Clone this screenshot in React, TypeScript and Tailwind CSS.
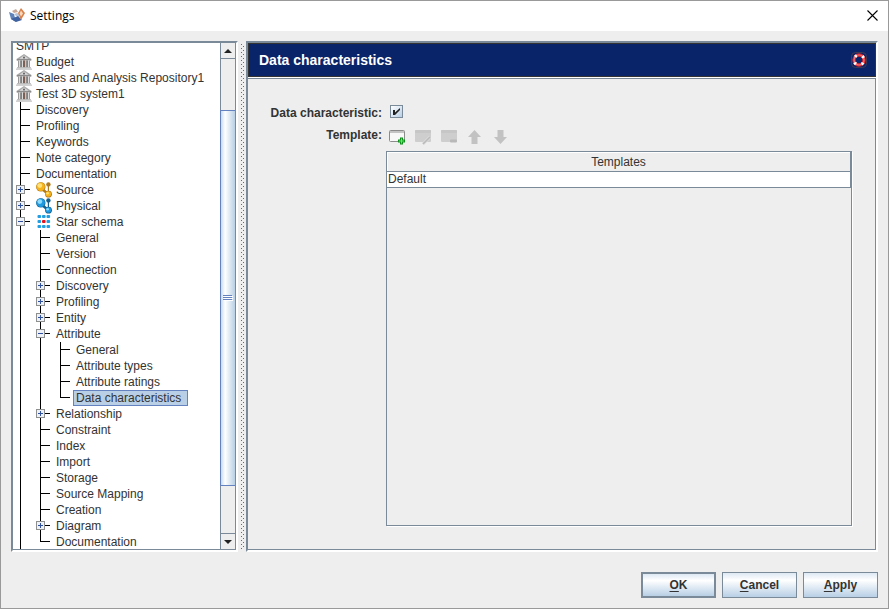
import * as React from "react";

type TreeNode = {
  label: string;
  icon?: "bank" | "source" | "physical" | "star";
  children?: TreeNode[];
  open?: boolean;
};

const repositories: TreeNode[] = [
  { label: "Budget", icon: "bank" },
  { label: "Sales and Analysis Repository1", icon: "bank" },
  { label: "Test 3D system1", icon: "bank" },
];

const settings: TreeNode[] = [
  { label: "Discovery" },
  { label: "Profiling" },
  { label: "Keywords" },
  { label: "Note category" },
  { label: "Documentation" },
  { label: "Source", icon: "source", children: [] },
  { label: "Physical", icon: "physical", children: [] },
  {
    label: "Star schema",
    icon: "star",
    open: true,
    children: [
      { label: "General" },
      { label: "Version" },
      { label: "Connection" },
      { label: "Discovery", children: [] },
      { label: "Profiling", children: [] },
      { label: "Entity", children: [] },
      {
        label: "Attribute",
        open: true,
        children: [
          { label: "General" },
          { label: "Attribute types" },
          { label: "Attribute ratings" },
          { label: "Data characteristics" },
        ],
      },
      { label: "Relationship", children: [] },
      { label: "Constraint" },
      { label: "Index" },
      { label: "Import" },
      { label: "Storage" },
      { label: "Source Mapping" },
      { label: "Creation" },
      { label: "Diagram", children: [] },
      { label: "Documentation" },
    ],
  },
];

const BankIcon = () => (
  <svg width="16" height="16" viewBox="0 0 16 16">
    <path d="M8 0L15.500 5v1.500H0.500V5z" fill="#a8a8a8" />
    <path d="M8 1.500L12.500 4.800H3.500z" fill="#dedede" />
    <circle cx="8" cy="3.600" r="1.100" fill="#6a6a6a" />
    <rect x="1" y="5.200" width="14" height="1.200" fill="#858585" />
    <rect x="2" y="6.400" width="12" height="7" fill="#dcdcdc" />
    <rect x="2" y="6.400" width="1" height="7" fill="#9a9a9a" />
    <rect x="4.400" y="6.400" width="1.300" height="7" fill="#5b5b5b" />
    <rect x="7" y="6.400" width="2.200" height="7" fill="#7d5f54" />
    <rect x="10.400" y="6.400" width="1.300" height="7" fill="#5b5b5b" />
    <rect x="13" y="6.400" width="1" height="7" fill="#9a9a9a" />
    <rect x="1" y="13.200" width="14" height="1.300" fill="#b4b4b4" />
    <rect x="0" y="14.500" width="16" height="1.300" fill="#c6c6c6" />
  </svg>
);

const BallsIcon = ({ light, mid, dark }: { light: string; mid: string; dark: string }) => (
  <svg width="16" height="16" viewBox="0 0 16 16">
    <path d="M5 6l7 6" stroke={dark} strokeWidth="2.500" />
    <path d="M12.400 3v8" stroke={dark} strokeWidth="1.200" />
    <circle cx="12.400" cy="2.400" r="2.200" fill={dark} />
    <circle cx="4.800" cy="4.900" r="4.700" fill={dark} />
    <circle cx="4.700" cy="4.700" r="4.200" fill={mid} />
    <circle cx="3.800" cy="3.600" r="2.400" fill={light} />
    <circle cx="12.500" cy="12.200" r="3.400" fill={dark} />
    <circle cx="12.300" cy="12" r="2.800" fill={mid} />
    <circle cx="11.600" cy="11.200" r="1.300" fill={light} />
  </svg>
);

const StarIcon = () => (
  <svg width="16" height="16" viewBox="0 0 16 16">
    {[1, 6, 11].map((y) =>
      [1.5, 6, 10.5].map((x) => (
        <rect
          key={`${x}-${y}`}
          x={x}
          y={y}
          width="3.600"
          height="3"
          rx="1"
          fill={x === 6 && y === 6 ? "#e8141c" : "#229fe0"}
        />
      ))
    )}
  </svg>
);

const NodeIcon = ({ icon }: { icon: TreeNode["icon"] }) => {
  if (icon === "bank") return <BankIcon />;
  if (icon === "source") return <BallsIcon light="#ffe27a" mid="#f6b31c" dark="#b07a1c" />;
  if (icon === "physical") return <BallsIcon light="#8fdcff" mid="#1f9ae0" dark="#14618f" />;
  return <StarIcon />;
};

const Handle = ({ open }: { open: boolean }) => (
  <>
    <rect x="3.5" y="3.5" width="8" height="8" fill="#eef1f7" stroke="#8e8f8f" />
    <path d={open ? "M5 7.5h5" : "M5 7.5h5M7.5 5v5"} stroke="#2f4f9f" />
  </>
);

const NodeLabel = ({ node, selected }: { node: TreeNode; selected?: boolean }) => (
  <>
    {node.icon && (
      <span className="w-5 shrink-0 pl-[3px]">
        <NodeIcon icon={node.icon} />
      </span>
    )}
    <span
      className={`h-4 border pl-[2px] leading-[14px] whitespace-nowrap ${
        selected ? "border-[#6382bf] bg-[#b8cfe5] pr-[6px]" : "border-transparent"
      }`}
    >
      {node.label}
    </span>
  </>
);

type ItemProps = { node: TreeNode; guides: boolean[]; last: boolean };

// guides holds one flag per ancestor level: true while its line goes on below
const TreeItem = ({ node, guides, last }: ItemProps) => {
  const [open, setOpen] = React.useState(!!node.open);
  const selected = node.label === "Data characteristics";

  return (
    <li role="treeitem" aria-selected={selected} aria-expanded={node.children ? open : undefined}>
      <div className="flex h-4 items-center">
        {guides.map((on, i) => (
          <svg key={i} className="shrink-0" width="20" height="16">
            {on && <path d="M7.5 0v16" stroke="#000" />}
          </svg>
        ))}
        {node.children ? (
          <button
            type="button"
            className="h-4 w-5 shrink-0"
            aria-label={`Toggle ${node.label}`}
            onClick={() => setOpen(!open)}
          >
            <svg width="20" height="16">
              <path d={last ? "M7.5 0v8M7 7.5h10" : "M7.5 0v16M7 7.5h10"} stroke="#000" />
              <Handle open={open} />
            </svg>
          </button>
        ) : (
          <svg className="shrink-0" width="20" height="16">
            <path d={last ? "M7.5 0v8M7 7.5h10" : "M7.5 0v16M7 7.5h10"} stroke="#000" />
          </svg>
        )}
        <NodeLabel node={node} selected={selected} />
      </div>
      {open && node.children && (
        <ul role="group">
          {node.children.map((el, i) => (
            <TreeItem
              key={i}
              node={el}
              guides={[...guides, !last]}
              last={i === node.children!.length - 1}
            />
          ))}
        </ul>
      )}
    </li>
  );
};

const ScrollBar = () => (
  <div className="flex w-[15px] shrink-0 flex-col bg-[#eeeeee]">
    <button
      type="button"
      aria-label="Scroll up"
      className="flex h-4 items-center justify-center border-b border-l border-[#7a8a99] bg-[#eeeeee]"
    >
      <svg width="8" height="4">
        <path d="M0 4L4 0L8 4z" fill="#222" />
      </svg>
    </button>
    <div className="flex-[51] border-l border-[#7a8a99]" />
    <div className="flex flex-[374] items-center justify-center border-y border-l border-[#6382bf] bg-linear-to-r from-[#c8dbee] via-white via-30% to-[#b8cfe5]">
      <svg width="10" height="6">
        <path d="M1 1.5h9M1 3.5h9M1 5.5h9" stroke="#fff" />
        <path d="M0 0.5h9M0 2.5h9M0 4.5h9" stroke="#6382bf" />
      </svg>
    </div>
    <div className="flex-[47] border-l border-[#7a8a99]" />
    <button
      type="button"
      aria-label="Scroll down"
      className="flex h-4 items-center justify-center border-t border-l border-[#7a8a99] bg-[#eeeeee]"
    >
      <svg width="8" height="4">
        <path d="M0 0L4 4L8 0z" fill="#222" />
      </svg>
    </button>
  </div>
);

const Splitter = () => (
  <svg className="my-[3px] w-2 shrink-0">
    <defs>
      <pattern id="bumps" width="8" height="4" patternUnits="userSpaceOnUse">
        <rect x="3" y="0" width="1" height="1" fill="#6a6a6a" />
        <rect x="5" y="2" width="1" height="1" fill="#6a6a6a" />
      </pattern>
    </defs>
    <rect width="8" height="100%" fill="url(#bumps)" />
  </svg>
);

const tools = [
  {
    label: "Add template",
    disabled: false,
    art: (
      <>
        <rect x="0.5" y="1.5" width="15" height="11" rx="1" fill="#f8f8f8" stroke="#8b8b8b" />
        <rect x="1" y="2" width="14" height="2" fill="#c4c4c4" />
        <path d="M12.5 8.500v7M9 12h7" stroke="#0f8f1c" strokeWidth="3" />
        <path d="M12.5 9.500v5M10 12h5" stroke="#5cf065" strokeWidth="1" />
      </>
    ),
  },
  {
    label: "Edit template",
    disabled: true,
    art: (
      <>
        <rect x="0" y="1" width="16" height="12" rx="1" fill="#cecece" />
        <rect x="0" y="1" width="16" height="3" rx="1" fill="#c6c6c6" />
        <path d="M15 8l-7 7" stroke="#dedede" strokeWidth="3" />
        <path d="M15 8l-7 7" stroke="#bababa" strokeWidth="1.6" />
      </>
    ),
  },
  {
    label: "Remove template",
    disabled: true,
    art: (
      <>
        <rect x="0" y="1" width="16" height="12" rx="1" fill="#cecece" />
        <rect x="0" y="1" width="16" height="3" rx="1" fill="#c6c6c6" />
        <rect x="9" y="10.500" width="7" height="3" rx="1" fill="#b8b8b8" />
      </>
    ),
  },
  {
    label: "Move up",
    disabled: true,
    art: <path d="M7.500 1L14 8h-3.500v7h-6V8H1z" fill="#c2c2c2" />,
  },
  {
    label: "Move down",
    disabled: true,
    art: <path d="M7.500 15L14 8h-3.500V1h-6v7H1z" fill="#c2c2c2" />,
  },
];

const Content = () => {
  const [checked, setChecked] = React.useState(true);

  return (
    <main className="flex min-w-0 flex-1 flex-col border-2 border-t-[#7a8a99] border-r-white border-b-white border-l-[#7a8a99]">
      <header className="flex h-[34px] shrink-0 items-center justify-between border border-[#333333] bg-[#0a246a] pr-2 pl-[10px] shadow-[0_1px_0_#ffffff]">
        <h1 className="text-[14px] font-bold text-white">Data characteristics</h1>
        <button type="button" aria-label="Help">
          <svg width="16" height="16" viewBox="0 0 16 16">
            <rect x="0.5" y="0.5" width="15" height="15" rx="4" fill="none" stroke="#3f3a52" />
            <circle cx="8" cy="8" r="5" fill="none" stroke="#d8262c" strokeWidth="3.4" />
            <circle cx="8" cy="8" r="5" fill="none" stroke="#f0787a" strokeWidth="1.2" />
            <circle
              cx="8"
              cy="8"
              r="5"
              fill="none"
              stroke="#fff"
              strokeWidth="3"
              strokeDasharray="2 5.854"
              strokeDashoffset="-2.927"
            />
          </svg>
        </button>
      </header>
      <div className="mt-px flex min-h-0 flex-1 flex-col border-t border-r border-b border-[#7a8a99] pt-[26px] pr-[23px] pb-[23px]">
        <div className="flex h-[21px] items-start">
          <label htmlFor="characteristic" className="w-[134px] text-right font-bold">
            Data characteristic:
          </label>
          <span className="ml-2 grid">
            <input
              id="characteristic"
              type="checkbox"
              checked={checked}
              onChange={() => setChecked(!checked)}
              className="col-start-1 row-start-1 size-[13px] appearance-none border border-[#7a8a99] bg-linear-to-br from-white to-[#b8cfe5]"
            />
            {checked && (
              <svg
                className="pointer-events-none col-start-1 row-start-1"
                width="13"
                height="13"
              >
                <path d="M3 5h2v2.500L10 3v2L5 10H3z" fill="#222" />
              </svg>
            )}
          </span>
        </div>
        <div className="flex h-[25px]">
          <span className="w-[134px] pt-px text-right font-bold leading-4">Template:</span>
          <div className="ml-[7px] flex items-start gap-[10px] pt-[3px]">
            {tools.map((tool) => (
              <button key={tool.label} type="button" aria-label={tool.label} disabled={tool.disabled}>
                <svg width="16" height="16" viewBox="0 0 16 16">
                  {tool.art}
                </svg>
              </button>
            ))}
          </div>
        </div>
        <div className="ml-[138px] flex-1 border border-[#7a8a99] shadow-[1px_1px_0_#ffffff]">
          <table className="w-full border-separate border-spacing-0">
            <thead>
              <tr>
                <th className="h-5 border-r border-b border-[#7a8a99] p-0 font-normal shadow-[inset_1px_1px_0_#ffffff]">
                  Templates
                </th>
              </tr>
            </thead>
            <tbody>
              <tr>
                <td className="h-4 border-r border-b border-[#7a8a99] bg-white p-0 pl-px leading-[15px]">
                  Default
                </td>
              </tr>
            </tbody>
          </table>
        </div>
      </div>
    </main>
  );
};

const actions = ["OK", "Cancel", "Apply"];

export default function App() {
  return (
    <div className="flex h-screen flex-col border border-[#999999] bg-[#eeeeee] font-['Liberation_Sans',Arial,sans-serif] text-[12px] leading-4 text-[#333333]">
      <div className="flex h-[30px] shrink-0 items-center bg-white pr-[10px] pl-2">
        <svg width="16" height="16" viewBox="0 0 16 16">
          <path d="M0 4l5 2 2 8-5-3z" fill="#5f83b8" />
          <path d="M5 6l3-1 3 1-1 3-3-1z" fill="#b7c6dc" />
          <path d="M2 11l5 3 6-2-4-4z" fill="#3f62a0" />
          <path d="M9 5l3-5 4 5-4 7z" fill="#d8824a" />
          <path d="M10.500 5.500L12 2.500l2 3-2 3z" fill="#f9d9bd" />
          <path d="M3 3l4-2 2 3-4 1z" fill="#c8a896" />
        </svg>
        <span className="ml-[5px] flex-1 font-['Open_Sans','Noto_Sans',sans-serif] text-black">
          Settings
        </span>
        <button type="button" aria-label="Close" className="pb-[2px]">
          <svg width="11" height="11">
            <path d="M0.500 0.500l10 10M10.500 0.500l-10 10" stroke="#000" strokeWidth="1.1" />
          </svg>
        </button>
      </div>
      <div className="flex min-h-0 flex-1 px-[10px] pt-[10px]">
        <nav className="flex w-[227px] shrink-0 border-2 border-t-[#7a8a99] border-r-white border-b-white border-l-[#7a8a99]">
          <div className="flex min-w-0 flex-1 border-r border-b border-[#7a8a99]">
            <ul role="tree" className="min-w-0 flex-1 overflow-hidden bg-white">
              <li className="flex h-[11px] items-end overflow-hidden">
                <NodeLabel node={{ label: "SMTP" }} />
              </li>
              {repositories.map((node) => (
                <li key={node.label} role="treeitem" className="flex h-4 items-center">
                  <NodeLabel node={node} />
                </li>
              ))}
              {/* the root line runs on past the visible rows */}
              {settings.map((node, i) => (
                <TreeItem key={i} node={node} guides={[]} last={false} />
              ))}
            </ul>
            <ScrollBar />
          </div>
        </nav>
        <Splitter />
        <Content />
      </div>
      <div className="flex shrink-0 justify-end gap-[6px] px-[10px] pt-5 pb-[10px]">
        {actions.map((label, i) => (
          <button
            key={label}
            type="button"
            className={`h-[26px] w-[75px] border-[#7a8a99] bg-linear-to-b from-[#dde8f3] via-white via-30% to-[#b8cfe5] font-bold ${
              i === 0 ? "border-2" : "border"
            }`}
          >
            <span className="underline underline-offset-2">{label[0]}</span>
            {label.slice(1)}
          </button>
        ))}
      </div>
    </div>
  );
}
